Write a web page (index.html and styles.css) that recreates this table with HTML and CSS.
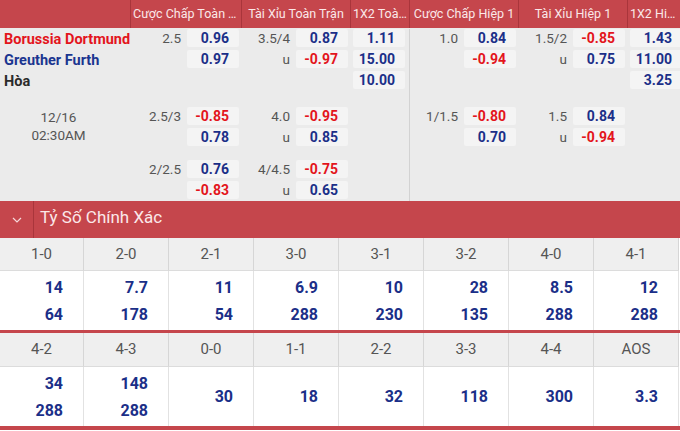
FILE: index.html
```
<!DOCTYPE html>
<html lang="vi">
<head>
<meta charset="utf-8">
<title>Odds</title>
<link rel="stylesheet" href="styles.css">
</head>
<body>
<div class="page">
  <div class="ohead">
    <div class="hc hteam"></div>
    <div class="hc w111">Cược Chấp Toàn Trận</div>
    <div class="hc w109">Tài Xỉu Toàn Trận</div>
    <div class="hc w59">1X2 Toàn Trận</div>
    <div class="hc w109">Cược Chấp Hiệp 1</div>
    <div class="hc w109">Tài Xỉu Hiệp 1</div>
    <div class="hc w53">1X2 Hiệp 1</div>
  </div>

  <div class="obody">
    <div class="col teamcol">
      <div class="g g1">
        <div class="row name home">Borussia Dortmund</div>
        <div class="row name away">Greuther Furth</div>
        <div class="row name draw">Hòa</div>
      </div>
      <div class="date">12/16<br>02:30AM</div>
    </div>

    <div class="col lc w111">
      <div class="g g1">
        <div class="row"><span class="ln">2.5</span><span class="box blue">0.96</span></div>
        <div class="row"><span class="ln"></span><span class="box blue">0.97</span></div>
        <div class="row"></div>
      </div>
      <div class="g g2">
        <div class="row"><span class="ln">2.5/3</span><span class="box red">-0.85</span></div>
        <div class="row"><span class="ln"></span><span class="box blue">0.78</span></div>
      </div>
      <div class="g g3">
        <div class="row"><span class="ln">2/2.5</span><span class="box blue">0.76</span></div>
        <div class="row"><span class="ln"></span><span class="box red">-0.83</span></div>
      </div>
    </div>

    <div class="col lc w109">
      <div class="g g1">
        <div class="row"><span class="ln">3.5/4</span><span class="box blue">0.87</span></div>
        <div class="row"><span class="ln">u</span><span class="box red">-0.97</span></div>
        <div class="row"></div>
      </div>
      <div class="g g2">
        <div class="row"><span class="ln">4.0</span><span class="box red">-0.95</span></div>
        <div class="row"><span class="ln">u</span><span class="box blue">0.85</span></div>
      </div>
      <div class="g g3">
        <div class="row"><span class="ln">4/4.5</span><span class="box red">-0.75</span></div>
        <div class="row"><span class="ln">u</span><span class="box blue">0.65</span></div>
      </div>
    </div>

    <div class="col xc w59">
      <div class="g g1">
        <div class="row"><span class="box blue">1.11</span></div>
        <div class="row"><span class="box blue">15.00</span></div>
        <div class="row"><span class="box blue">10.00</span></div>
      </div>
    </div>

    <div class="col lc w109 sep">
      <div class="g g1">
        <div class="row"><span class="ln">1.0</span><span class="box blue">0.84</span></div>
        <div class="row"><span class="ln"></span><span class="box red">-0.94</span></div>
        <div class="row"></div>
      </div>
      <div class="g g2">
        <div class="row"><span class="ln">1/1.5</span><span class="box red">-0.80</span></div>
        <div class="row"><span class="ln"></span><span class="box blue">0.70</span></div>
      </div>
    </div>

    <div class="col lc w109">
      <div class="g g1">
        <div class="row"><span class="ln">1.5/2</span><span class="box red">-0.85</span></div>
        <div class="row"><span class="ln">u</span><span class="box blue">0.75</span></div>
        <div class="row"></div>
      </div>
      <div class="g g2">
        <div class="row"><span class="ln">1.5</span><span class="box blue">0.84</span></div>
        <div class="row"><span class="ln">u</span><span class="box red">-0.94</span></div>
      </div>
    </div>

    <div class="col xc w53">
      <div class="g g1">
        <div class="row"><span class="box blue">1.43</span></div>
        <div class="row"><span class="box blue">11.00</span></div>
        <div class="row"><span class="box blue">3.25</span></div>
      </div>
    </div>
  </div>

  <div class="sect">
    <div class="chev"><svg width="10" height="6" viewBox="0 0 10 6"><path d="M1 1 L5 5 L9 1" fill="none" stroke="#f6d9da" stroke-width="1.2"/></svg></div>
    <div class="stitle">Tỷ Số Chính Xác</div>
  </div>

  <div class="scores">
    <div class="sh">1-0</div><div class="sh">2-0</div><div class="sh">2-1</div><div class="sh">3-0</div>
    <div class="sh">3-1</div><div class="sh">3-2</div><div class="sh">4-0</div><div class="sh">4-1</div>
    <div class="sv"><span>14</span><span>64</span></div>
    <div class="sv"><span>7.7</span><span>178</span></div>
    <div class="sv"><span>11</span><span>54</span></div>
    <div class="sv"><span>6.9</span><span>288</span></div>
    <div class="sv"><span>10</span><span>230</span></div>
    <div class="sv"><span>28</span><span>135</span></div>
    <div class="sv"><span>8.5</span><span>288</span></div>
    <div class="sv"><span>12</span><span>288</span></div>
  </div>
  <div class="scores second">
    <div class="sh">4-2</div><div class="sh">4-3</div><div class="sh">0-0</div><div class="sh">1-1</div>
    <div class="sh">2-2</div><div class="sh">3-3</div><div class="sh">4-4</div><div class="sh">AOS</div>
    <div class="sv"><span>34</span><span>288</span></div>
    <div class="sv"><span>148</span><span>288</span></div>
    <div class="sv"><span>30</span></div>
    <div class="sv"><span>18</span></div>
    <div class="sv"><span>32</span></div>
    <div class="sv"><span>118</span></div>
    <div class="sv"><span>300</span></div>
    <div class="sv"><span>3.3</span></div>
  </div>
</div>
</body>
</html>
```

FILE: styles.css
```
* { box-sizing: border-box; }
html, body { margin: 0; padding: 0; }
body {
  width: 680px;
  height: 431px;
  overflow: hidden;
  background: #ffffff;
  font-family: "Segoe UI", Roboto, "Noto Sans", sans-serif;
}
.page { width: 680px; }

.w111 { width: 111px; }
.w109 { width: 109px; }
.w59 { width: 59px; }
.w53 { width: 53px; }

.ohead {
  display: flex;
  height: 28px;
  background: #c5464c;
}
.hc {
  flex: none;
  height: 28px;
  line-height: 28px;
  font-size: 12.5px;
  color: #fbe8e9;
  text-align: center;
  white-space: nowrap;
  overflow: hidden;
  text-overflow: ellipsis;
  padding: 0 2px;
  border-left: 1px solid #a9353b;
}
.hteam { width: 130px; border-left: none; }

.obody {
  display: flex;
  height: 173px;
  overflow: hidden;
  background: #ebebeb;
  padding-top: 1px;
}
.col { flex: none; display: flex; flex-direction: column; }
.teamcol { width: 130px; }
.sep { border-left: 1px solid #d2d2d2; }

.row {
  height: 21px;
  display: flex;
  align-items: flex-start;
  justify-content: flex-end;
}
.g2 { margin-top: 15px; }
.g3 { margin-top: 11px; }

.lc .row { padding-right: 2px; }
.xc .row { justify-content: flex-start; padding-left: 3px; }

.ln {
  font-size: 13.5px;
  color: #555;
  line-height: 18px;
  margin-right: 6px;
}
.box {
  flex: none;
  width: 52px;
  height: 18px;
  line-height: 18px;
  background: #f4f4f4;
  border-radius: 2px;
  text-align: right;
  padding-right: 10px;
  font-size: 14px;
  font-weight: 700;
}
.blue { color: #1b2f88; }
.red { color: #e3151c; }

.name {
  justify-content: flex-start;
  align-items: center;
  padding-left: 4px;
  font-size: 14.5px;
  font-weight: 700;
  white-space: nowrap;
}
.home { color: #e3151c; }
.away { color: #1b3590; }
.draw { color: #2b2b2b; }

.date {
  margin-top: 16px;
  width: 117px;
  text-align: center;
  font-size: 13.5px;
  line-height: 18px;
  color: #555;
}

.sect {
  display: flex;
  height: 37px;
  background: #c5464c;
}
.chev {
  width: 34px;
  display: flex;
  align-items: center;
  justify-content: center;
  border-right: 1px solid #a9353b;
}
.stitle {
  padding-left: 6px;
  line-height: 33px;
  font-size: 17px;
  color: #fbe8e9;
}

.scores {
  display: grid;
  grid-template-columns: 84px repeat(7, 85px);
  border-bottom: 3px solid #c5464c;
}
.sh {
  height: 33px;
  line-height: 32px;
  background: #efefef;
  text-align: center;
  font-size: 15px;
  color: #555;
  border-right: 1px solid #d6d6d6;
  border-bottom: 1px solid #dcdcdc;
}
.sv {
  height: 59px;
  background: #fff;
  border-right: 1px solid #e2e2e2;
  display: flex;
  flex-direction: column;
  justify-content: center;
  align-items: flex-end;
  padding-right: 20px;
  font-size: 16px;
  font-weight: 700;
  color: #1b2f88;
  line-height: 27px;
}
.second .sh { height: 34px; line-height: 33px; }
.second { border-bottom-width: 4px; }
```
